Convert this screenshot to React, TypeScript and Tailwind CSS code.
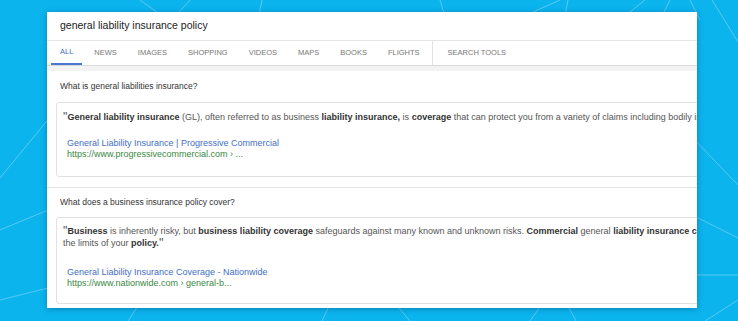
import React from "react";

const TABS = ["ALL", "NEWS", "IMAGES", "SHOPPING", "VIDEOS", "MAPS", "BOOKS", "FLIGHTS"];

// faint net lines on the blue backdrop
const NET: [number, number, number, number][] = [
  [0, 178, 60, 105],
  [0, 230, 60, 205],
  [0, 300, 60, 285],
  [140, 0, 168, 20],
  [190, 0, 172, 20],
  [262, 0, 258, 20],
  [440, 0, 446, 20],
  [560, 0, 515, 20],
  [568, 0, 564, 20],
  [645, 0, 620, 20],
  [670, 0, 660, 20],
  [712, 0, 738, 42],
  [690, 0, 700, 20],
  [690, 135, 738, 185],
  [690, 214, 738, 238],
  [690, 275, 738, 275],
  [705, 321, 738, 300],
  [128, 321, 142, 300],
  [322, 321, 332, 300],
  [392, 300, 410, 321],
  [545, 300, 530, 321],
  [565, 300, 576, 321],
];

function Quote() {
  return <span className="text-[12.5px] leading-[0] font-normal text-[#555] relative top-[1px]">"</span>;
}

function Answer({
  title,
  children,
  link,
  url,
  titleH,
  boxPad,
  linkGap,
}: {
  title: string;
  children: React.ReactNode;
  link: string;
  url: string;
  titleH: string;
  boxPad: string;
  linkGap: string;
}) {
  return (
    <div className="px-[9px] pb-[10px] bg-white">
      <div className={`${titleH} flex items-center pl-[4px] text-[8.5px] text-[#333]`}>{title}</div>
      <div className={`w-[900px] border border-[#e2e2e2] rounded-[3px] px-[6px] ${boxPad}`}>
        <div className="text-[9px] leading-[12px] text-[#555] whitespace-nowrap">{children}</div>
        <div className={`${linkGap} pl-[4px] text-[9px] leading-[12px] text-[#3f6fc6]`}>{link}</div>
        <div className="pl-[4px] text-[9px] leading-[11px] text-[#3b873f]">{url}</div>
      </div>
    </div>
  );
}

export default function App() {
  return (
    <div
      className="relative w-[738px] h-[321px] overflow-hidden bg-[#0cb4ee] pt-[12px] pl-[47px]"
      style={{ fontFamily: '"Liberation Sans", Arial, sans-serif' }}
    >
      <svg className="absolute inset-0" width="738" height="321">
        {NET.map(([x1, y1, x2, y2], i) => (
          <line key={i} x1={x1} y1={y1} x2={x2} y2={y2} stroke="#ffffff" strokeOpacity="0.3" strokeWidth="1" />
        ))}
      </svg>

      <div className="relative w-[650px] h-[296px] bg-white overflow-hidden shadow-[0_1px_6px_rgba(0,40,80,0.35)]">
        <div className="h-[29px] flex items-center pl-[13px] text-[10.5px] text-[#222] border-b border-[#e6e6e6]">
          general liability insurance policy
        </div>

        <div className="h-[25px] flex pl-[4px] gap-[3px] border-b border-[#dadada] text-[7.5px] text-[#777]">
          {TABS.map((t, i) => (
            <div
              key={t}
              className={
                i === 0
                  ? "px-[9px] flex items-center border-b-2 border-[#4a78d0] text-[#3e6fcc]"
                  : "px-[9px] flex items-center"
              }
            >
              {t}
            </div>
          ))}
          <div className="border-l border-[#e2e2e2] pl-[15px] flex items-center">SEARCH TOOLS</div>
        </div>
        <div className="h-[5px] bg-[#f3f3f3]" />

        <Answer
          title="What is general liabilities insurance?"
          titleH="h-[31px]"
          boxPad="pt-[8px] pb-[16px]"
          linkGap="mt-[14px]"
          link="General Liability Insurance | Progressive Commercial"
          url="https://www.progressivecommercial.com › ..."
        >
          <Quote />
          <b className="text-[#333]">General liability insurance</b> (GL), often referred to as business{" "}
          <b className="text-[#333]">liability insurance,</b> is <b className="text-[#333]">coverage</b> that can
          protect you from a variety of claims including bodily injury
        </Answer>

        <div className="h-[1px] bg-[#e4e4e4]" />

        <Answer
          title="What does a business insurance policy cover?"
          titleH="h-[29px]"
          boxPad="pt-[7px] pb-[14px]"
          linkGap="mt-[17px]"
          link="General Liability Insurance Coverage - Nationwide"
          url="https://www.nationwide.com › general-b..."
        >
          <Quote />
          <b className="text-[#333]">Business</b> is inherently risky, but{" "}
          <b className="text-[#333]">business liability coverage</b> safeguards against many known and unknown
          risks. <b className="text-[#333]">Commercial</b> general{" "}
          <b className="text-[#333]">liability insurance covers</b>
          <br />
          the limits of your <b className="text-[#333]">policy.</b>
          <Quote />
        </Answer>
      </div>
    </div>
  );
}
